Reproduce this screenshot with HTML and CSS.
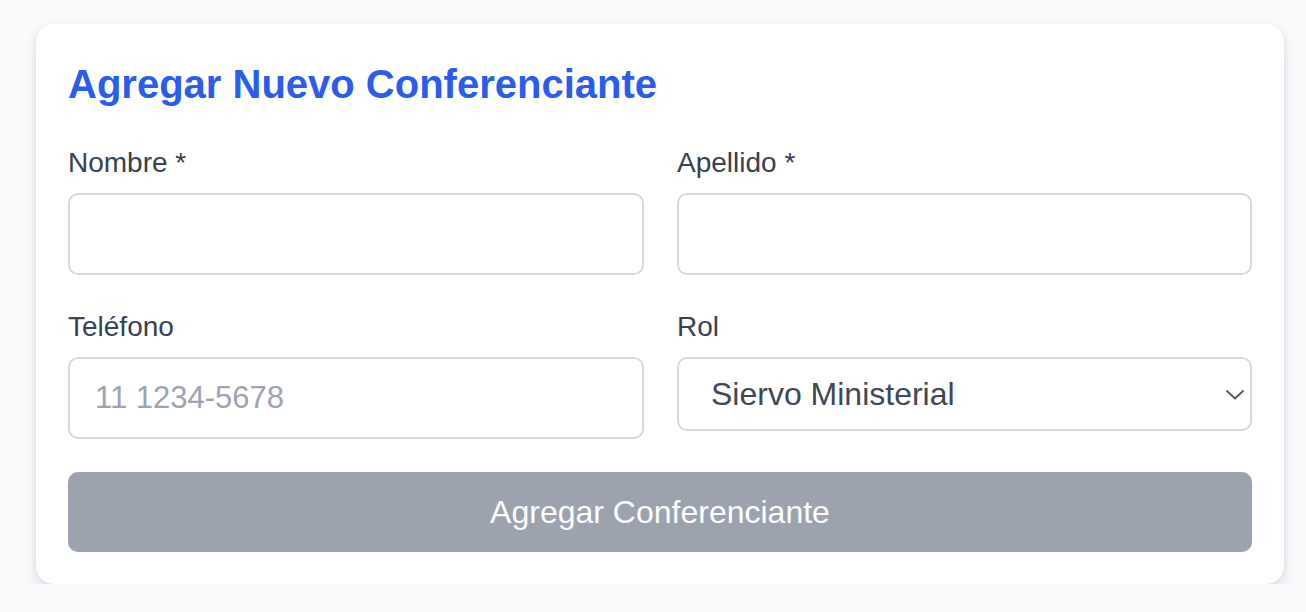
FILE: index.html
```html
<!DOCTYPE html>
<html lang="es">
<head>
<meta charset="utf-8">
<title>Agregar Nuevo Conferenciante</title>
<link rel="stylesheet" href="styles.css">
</head>
<body>
<main class="card">
  <h2 class="title">Agregar Nuevo Conferenciante</h2>
  <form class="form">
    <div class="grid">
      <div class="field">
        <label class="label" for="nombre">Nombre *</label>
        <input class="input" id="nombre" type="text">
      </div>
      <div class="field">
        <label class="label" for="apellido">Apellido *</label>
        <input class="input" id="apellido" type="text">
      </div>
      <div class="field">
        <label class="label" for="telefono">Teléfono</label>
        <input class="input" id="telefono" type="tel" placeholder="11 1234-5678">
      </div>
      <div class="field">
        <label class="label" for="rol">Rol</label>
        <div class="select-wrap">
          <select class="select" id="rol">
            <option>Siervo Ministerial</option>
            <option>Anciano</option>
          </select>
          <svg class="chevron" width="18" height="10" viewBox="0 0 18 10" aria-hidden="true">
            <path d="M1 1 L9 8.5 L17 1" fill="none" stroke="#4b5563" stroke-width="1.8" stroke-linecap="round" stroke-linejoin="round"/>
          </svg>
        </div>
      </div>
    </div>
    <button class="button" type="button" disabled>Agregar Conferenciante</button>
  </form>
</main>
</body>
</html>
```

FILE: styles.css
```css
* { box-sizing: border-box; }

html, body {
  margin: 0;
  padding: 0;
  background: #f8f9fb;
  font-family: "Liberation Sans", Arial, Helvetica, sans-serif;
}

body {
  padding: 24px 22px 0 36px;
}

.card {
  background: #ffffff;
  border-radius: 18px;
  padding: 32px;
  box-shadow: 0 6px 14px rgba(15, 23, 42, 0.10), 0 2px 4px rgba(15, 23, 42, 0.06);
}

.title {
  margin: 0 0 31px;
  font-size: 40px;
  line-height: 56px;
  font-weight: 700;
  color: #2b5cf0;
}

.form {
  display: flex;
  flex-direction: column;
  gap: 33px;
}

.grid {
  display: grid;
  grid-template-columns: 576px 1fr;
  column-gap: 33px;
  row-gap: 32px;
  align-items: start;
}

.field {
  display: flex;
  flex-direction: column;
  gap: 10px;
}

.label {
  font-size: 28px;
  line-height: 40px;
  color: #374151;
}

.input {
  height: 82px;
  border: 2px solid #d5d8de;
  border-radius: 10px;
  padding: 0 25px;
  font-family: inherit;
  font-size: 31px;
  color: #374151;
  background: #fff;
  outline: none;
}

.input::placeholder {
  color: #9ca3af;
}

.select-wrap {
  position: relative;
}

.select {
  width: 100%;
  height: 74px;
  border: 2px solid #d5d8de;
  border-radius: 10px;
  padding: 0 60px 0 32px;
  font-family: inherit;
  font-size: 32px;
  color: #3f4856;
  background: #fff;
  appearance: none;
  -webkit-appearance: none;
  outline: none;
}

.chevron {
  position: absolute;
  right: 8px;
  top: 33px;
}

.button {
  height: 80px;
  border: none;
  border-radius: 10px;
  background: #9ca3af;
  color: #ffffff;
  font-family: inherit;
  font-size: 32px;
}
```
